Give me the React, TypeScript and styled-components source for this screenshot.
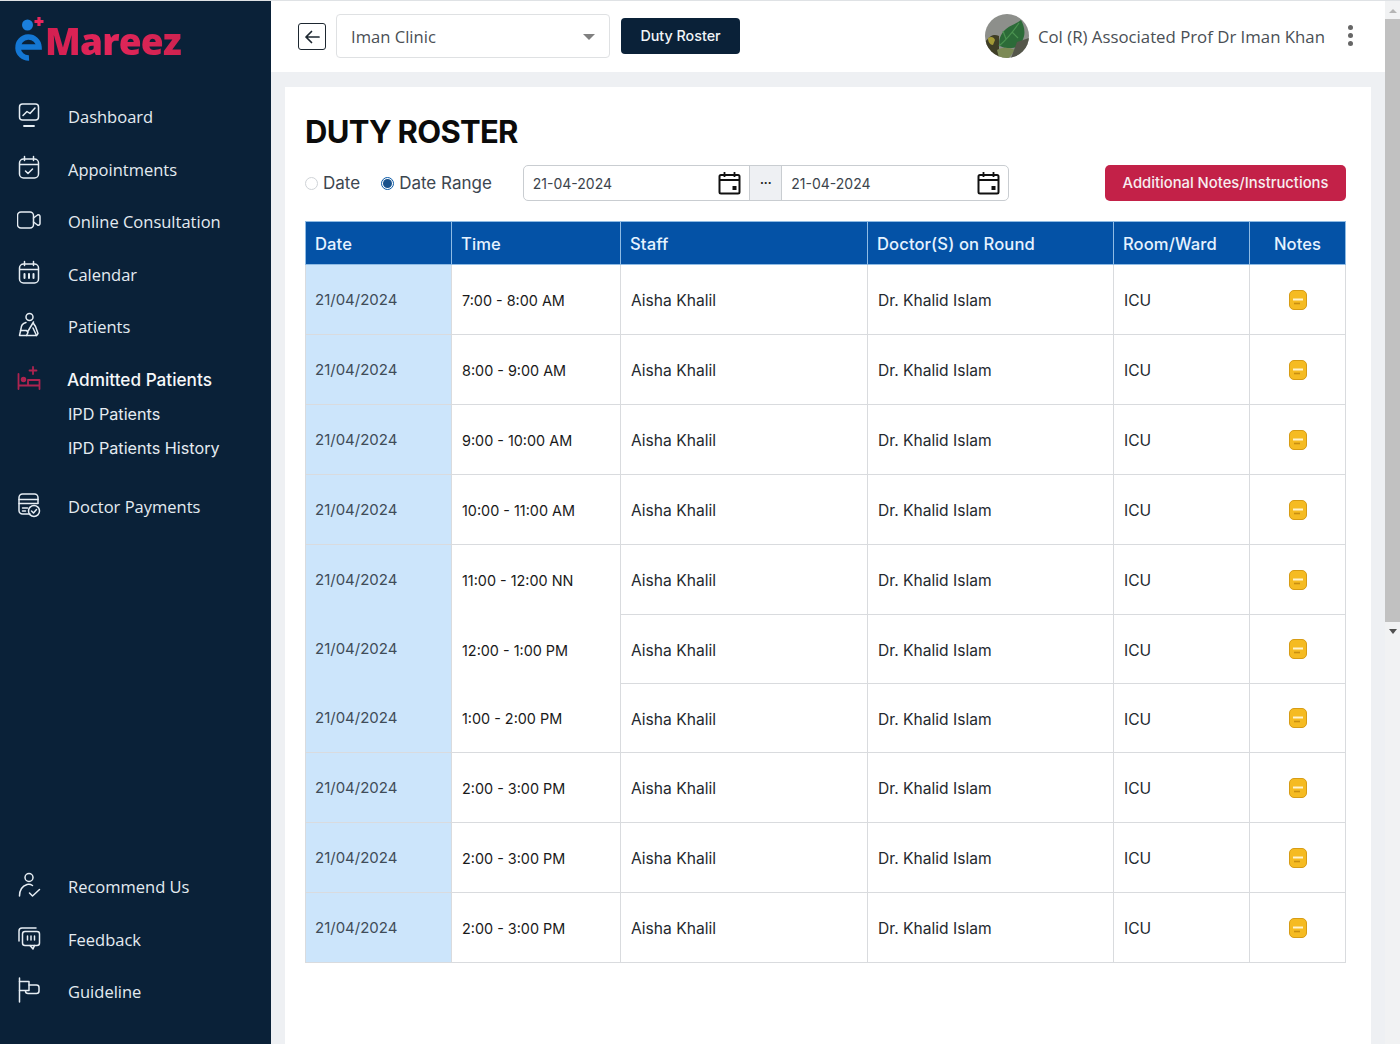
import React from "react";
import styled, { createGlobalStyle } from "styled-components";

const Global = createGlobalStyle`
  html, body { margin: 0; padding: 0; background: #eef0f3; }
  * { box-sizing: border-box; }
  #root { width: 1400px; height: 1044px; overflow: hidden; }
`;

const sans = `"Open Sans", "Noto Sans", sans-serif`;
const geo = `Inter, "Noto Sans", sans-serif`;

const Page = styled.div`
  display: flex;
  height: 1044px;
  border-top: 1px solid #dfe2e5;
  font-family: ${geo};
`;

const Sidebar = styled.aside`
  width: 271px;
  flex: none;
  background: #0a2138;
  display: flex;
  flex-direction: column;
  padding-bottom: 26px;
`;

const Logo = styled.div`
  height: 89.5px;
  display: flex;
  align-items: flex-start;
  padding: 11px 0 0 14px;
`;

const LogoWord = styled.span`
  font-family: ${sans};
  font-weight: 800;
  font-size: 37px;
  line-height: 48px;
  margin-top: 5px;
  letter-spacing: -0.8px;
  background: linear-gradient(90deg, #d31f50, #e2265a 45%, #cf2350);
  -webkit-background-clip: text;
  background-clip: text;
  color: transparent;
`;

const NavGroup = styled.nav`
  display: flex;
  flex-direction: column;
`;

const BottomGroup = styled(NavGroup)`
  margin-top: auto;
`;

const NavItem = styled.div<{ $active?: boolean }>`
  height: 52.5px;
  display: flex;
  align-items: center;
  gap: ${(p) => (p.$active ? "26px" : "27px")};
  padding-left: 17px;
  color: ${(p) => (p.$active ? "#f6f8fa" : "#e4ebf1")};
  font-family: ${(p) => (p.$active ? geo : sans)};
  font-weight: 500;
  font-size: ${(p) => (p.$active ? "17.2px" : "16.5px")};
`;

const SubItem = styled.div`
  height: 34px;
  display: flex;
  align-items: center;
  padding-left: 68px;
  color: #e4ebf1;
  font-size: 16.2px;
  font-weight: 400;
`;

const SubGroup = styled.div`
  margin-top: -9px;
  margin-bottom: 16px;
`;

const Main = styled.div`
  flex: 1;
  display: flex;
  flex-direction: column;
  min-width: 0;
`;

const Header = styled.header`
  height: 71px;
  flex: none;
  background: #fff;
  display: flex;
  align-items: center;
  padding: 0 32px 0 27px;
`;

const BackButton = styled.div`
  width: 28px;
  height: 27px;
  border: 1.5px solid #1d2730;
  border-radius: 3px;
  margin-right: 10px;
  display: flex;
  align-items: center;
  justify-content: center;
`;

const ClinicSelect = styled.div`
  width: 274px;
  height: 44px;
  border: 1px solid #dfe1e3;
  border-radius: 4px;
  display: flex;
  align-items: center;
  justify-content: space-between;
  padding: 2px 14px 0 14px;
  font-family: ${sans};
  font-size: 16.6px;
  color: #4a4f55;
  margin: -2px 11px 0 0;
`;

const Caret = styled.span`
  width: 0;
  height: 0;
  border-left: 6px solid transparent;
  border-right: 6px solid transparent;
  border-top: 6px solid #808080;
`;

const DarkButton = styled.button`
  width: 119px;
  height: 36px;
  border: 0;
  border-radius: 4px;
  background: #0a2138;
  color: #f1f5f8;
  font-family: ${geo};
  font-weight: 500;
  font-size: 14.3px;
  margin-top: -2px;
`;

const UserBlock = styled.div`
  margin-left: auto;
  display: flex;
  align-items: center;
`;

const Avatar = styled.div`
  width: 44px;
  height: 44px;
  border-radius: 50%;
  overflow: hidden;
  margin: -2px 9px 0 0;
`;

const UserName = styled.span`
  font-family: ${sans};
  font-size: 16.8px;
  color: #4a4f55;
  margin-right: 23px;
  white-space: nowrap;
`;

const Kebab = styled.div`
  display: flex;
  flex-direction: column;
  gap: 3px;
  margin-top: -2px;
  span {
    width: 5px;
    height: 5px;
    border-radius: 50%;
    background: #666;
  }
`;

const Content = styled.main`
  flex: 1;
  padding: 15px 14px 0;
  min-height: 0;
`;

const Card = styled.section`
  height: 100%;
  background: #fff;
  padding: 27px 25px 0 20px;
`;

const Title = styled.h1`
  margin: 0;
  font-family: ${geo};
  font-weight: 700;
  font-size: 31px;
  letter-spacing: -0.7px;
  line-height: 36px;
  color: #0b0b0b;
`;

const FilterRow = styled.div`
  display: flex;
  align-items: center;
  height: 36px;
  margin-top: 15px;
`;

const RadioLabel = styled.label`
  display: flex;
  align-items: center;
  gap: 5px;
  font-size: 17px;
  color: #3c4650;
  margin-right: 21px;
`;

const RadioDot = styled.span<{ $on?: boolean }>`
  width: 13px;
  height: 13px;
  border-radius: 50%;
  border: 1px solid ${(p) => (p.$on ? "#0a5aa8" : "#cfd3d7")};
  display: flex;
  align-items: center;
  justify-content: center;
  &::after {
    content: "";
    width: 9px;
    height: 9px;
    border-radius: 50%;
    background: ${(p) => (p.$on ? "#18518c" : "transparent")};
  }
`;

const DateGroup = styled.div`
  margin-left: 10px;
  width: 486px;
  height: 36px;
  border: 1px solid #c9cdd1;
  border-radius: 5px;
  display: flex;
  overflow: hidden;
`;

const DateField = styled.div`
  flex: 1;
  display: flex;
  align-items: center;
  justify-content: space-between;
  padding: 0 8px 0 9px;
  font-size: 14px;
  color: #3c444c;
`;

const DateDots = styled.div`
  width: 33px;
  flex: none;
  background: #eef0f3;
  border-left: 1px solid #c9cdd1;
  border-right: 1px solid #c9cdd1;
  display: flex;
  align-items: center;
  justify-content: center;
  font-size: 11px;
  font-weight: 800;
  color: #222;
`;

const NotesButton = styled.button`
  margin-left: auto;
  width: 241px;
  height: 36px;
  border: 0;
  border-radius: 5px;
  background: #c32148;
  color: #f7eef0;
  font-family: ${geo};
  font-weight: 500;
  font-size: 14.8px;
`;

const Table = styled.table`
  margin-top: 20px;
  width: 1040px;
  table-layout: fixed;
  border-collapse: collapse;
`;

const Th = styled.th`
  height: 43px;
  background: #0452a6;
  color: #e6f2ff;
  font-weight: 500;
  font-size: 16.6px;
  letter-spacing: 0.1px;
  text-align: left;
  padding: 2px 9px 0;
  border: 1px solid #8fbbe4;
`;

const NotesTh = styled(Th)`
  text-align: center;
`;

const Td = styled.td<{ $open?: boolean; $h: number }>`
  height: ${(p) => p.$h}px;
  padding: 2px 10px 0;
  font-size: 15.6px;
  color: #24292e;
  border-left: 1px solid #d9dbde;
  border-right: 1px solid #d9dbde;
  border-bottom: ${(p) => (p.$open ? "0" : "1px solid #d9dbde")};
`;

const DateTd = styled(Td)`
  background: #cce5fb;
  color: #3f4c58;
  padding: 0 9px 1px;
  font-size: 15px;
`;

const TimeTd = styled(Td)`
  color: #1a1a1a;
  font-size: 14.4px;
`;

const NoteTd = styled(Td)`
  text-align: center;
  padding: 0;
`;

const NoteIcon = styled.svg`
  display: block;
  margin: 0 auto;
`;

const Scrollbar = styled.div`
  width: 15px;
  flex: none;
  background: #f1f2f3;
  display: flex;
  flex-direction: column;
  align-items: center;
`;

const ScrollArrowUp = styled.span`
  margin: 8px 0 6px;
  width: 0;
  height: 0;
  border-left: 4px solid transparent;
  border-right: 4px solid transparent;
  border-bottom: 4px solid #b5b5b5;
`;

const ScrollThumb = styled.div`
  width: 100%;
  height: 603px;
  background: #c1c1c1;
`;

const ScrollArrowDown = styled.span`
  margin-top: 7px;
  width: 0;
  height: 0;
  border-left: 4px solid transparent;
  border-right: 4px solid transparent;
  border-top: 5px solid #505050;
`;

const Ico: React.FC<{ color?: string; children: React.ReactNode }> = ({ color = "#e6edf3", children }) => (
  <svg width="24" height="28" viewBox="0 0 24 28" fill="none" stroke={color} strokeWidth="1.5" strokeLinecap="round" strokeLinejoin="round" style={{ flex: "none", marginTop: -3 }}>
    {children}
  </svg>
);

const icons: Record<string, React.ReactNode> = {
  dashboard: (
    <Ico>
      <rect x="2.5" y="3" width="19" height="16" rx="3" />
      <path d="M6 14.5l4-4 3 2 5-5.5" />
      <path d="M7 25h10" strokeWidth="1.8" />
    </Ico>
  ),
  appointments: (
    <Ico>
      <rect x="2.5" y="5" width="19" height="19" rx="4" />
      <path d="M7.5 2.5v4M16.5 2.5v4M3 10.5h18" />
      <path d="M8.5 17l2.5 2.5 4.5-4.5" />
    </Ico>
  ),
  video: (
    <Ico>
      <rect x="0.5" y="6" width="16" height="16" rx="3.5" />
      <path d="M16.5 12l4-3c1-.6 2.5 0 2.5 1.5v7c0 1.5-1.5 2.100-2.500 1.500l-4-3" />
    </Ico>
  ),
  calendar: (
    <Ico>
      <rect x="2.5" y="5" width="19" height="19" rx="4" />
      <path d="M7.500 2.500v4M16.500 2.500v4M3 10.500h18" />
      <path d="M7.500 15v4M12 15v4M16.500 15v4" strokeWidth="2" />
    </Ico>
  ),
  patients: (
    <Ico>
      <circle cx="12.500" cy="6" r="3.500" />
      <path d="M9 11.500c-3 .8-5 3-5 6.500l-1.500 6.500h17l1.500-2-2.500-7-2-3" />
      <path d="M3.500 19.500h6l1.500 2-1.500 3M10.500 21l6-10M16 17l3.500 7.500" />
    </Ico>
  ),
  bed: (
    <Ico color="#ad2450">
      <path d="M16 3v7M12.500 6.500h7" strokeWidth="1.800" />
      <path d="M1.500 10v15M1.500 21.500h21M22.500 25v-9H11v5" strokeWidth="1.800" />
      <circle cx="6.500" cy="15.500" r="2" fill="#ad2450" />
    </Ico>
  ),
  payments: (
    <Ico>
      <path d="M13 23H5.500a3.500 3.500 0 0 1-3.500-3.500v-13A3.500 3.500 0 0 1 5.500 3h12A3.500 3.500 0 0 1 21 6.500V12" />
      <path d="M2 8.500h19M2 12.500h19M5.500 17h5M5.500 20h3" />
      <circle cx="17" cy="20" r="5.500" />
      <path d="M14.500 20l2 2 3-3.500" />
    </Ico>
  ),
  recommend: (
    <Ico>
      <circle cx="12" cy="6.500" r="4" />
      <path d="M2.500 25c0-6 3-10 7.500-11.500 2-.5 4 0 5.500 1" />
      <path d="M12.500 22l3 3 7-6.500" />
    </Ico>
  ),
  feedback: (
    <Ico>
      <path d="M2 17V7a3 3 0 0 1 3-3h14" />
      <rect x="5.500" y="7.500" width="17" height="14" rx="2.500" />
      <path d="M13 21.500l3 3.500 1.500-3.500M10.500 12v4M14 12v4M17.500 12v4" />
    </Ico>
  ),
  flag: (
    <Ico>
      <path d="M2.500 2v24" />
      <path d="M2.500 5.500h9.500v9h-9.500" />
      <path d="M12 9h7.500a2.500 2.500 0 0 1 2.500 2.500v3.500a2.500 2.500 0 0 1-2.500 2.500H11a2.500 2.500 0 0 1-2.500-2.500" />
    </Ico>
  ),
};

const CalIcon = () => (
  <svg width="23" height="24" viewBox="0 0 23 24" fill="none" stroke="#111" strokeWidth="2">
    <rect x="1.500" y="4" width="20" height="18.500" rx="1.500" />
    <path d="M1.500 9h20M6.500 1v5M16.500 1v5" strokeWidth="1.800" />
    <rect x="14.500" y="15" width="4" height="4" fill="#111" stroke="none" />
  </svg>
);

const NoteGlyph = () => (
  <NoteIcon width="18" height="20" viewBox="0 0 18 20">
    <rect x="0.500" y="0.500" width="17" height="19" rx="4.500" fill="#f5bb22" stroke="#d79c14" />
    <path d="M4 9.500h10" stroke="#fff3cf" strokeWidth="2" />
    <path d="M5 13.500h6" stroke="#c98f10" strokeWidth="1.600" />
  </NoteIcon>
);

const rows: { time: string; h: number; open?: boolean }[] = [
  { time: "7:00 - 8:00 AM", h: 70 },
  { time: "8:00 - 9:00 AM", h: 70 },
  { time: "9:00 - 10:00 AM", h: 70 },
  { time: "10:00 - 11:00 AM", h: 70 },
  { time: "11:00 - 12:00 NN", h: 70, open: true },
  { time: "12:00 - 1:00 PM", h: 69, open: true },
  { time: "1:00 - 2:00 PM", h: 69 },
  { time: "2:00 - 3:00 PM", h: 70 },
  { time: "2:00 - 3:00 PM", h: 70 },
  { time: "2:00 - 3:00 PM", h: 70 },
];

export default function App() {
  return (
    <>
      <Global />
      <Page>
        <Sidebar>
          <Logo>
            <svg width="31" height="50" viewBox="0 0 31 50" fill="none">
              <circle cx="13.500" cy="13" r="5.500" fill="#1b7fdc" />
              <path d="M25 5v9M20.500 9.500h9" stroke="#e8265c" strokeWidth="3.200" />
              <path d="M4.500 35h20.500a10.500 10.500 0 1 0-10 11" stroke="#1477d4" strokeWidth="5.500" />
            </svg>
            <LogoWord>Mareez</LogoWord>
          </Logo>
          <NavGroup>
            <NavItem>{icons.dashboard}Dashboard</NavItem>
            <NavItem>{icons.appointments}Appointments</NavItem>
            <NavItem>{icons.video}Online Consultation</NavItem>
            <NavItem>{icons.calendar}Calendar</NavItem>
            <NavItem>{icons.patients}Patients</NavItem>
            <NavItem $active>{icons.bed}Admitted Patients</NavItem>
            <SubGroup>
              <SubItem>IPD Patients</SubItem>
              <SubItem>IPD Patients History</SubItem>
            </SubGroup>
            <NavItem>{icons.payments}Doctor Payments</NavItem>
          </NavGroup>
          <BottomGroup>
            <NavItem>{icons.recommend}Recommend Us</NavItem>
            <NavItem>{icons.feedback}Feedback</NavItem>
            <NavItem>{icons.flag}Guideline</NavItem>
          </BottomGroup>
        </Sidebar>
        <Main>
          <Header>
            <BackButton>
              <svg width="18" height="16" viewBox="0 0 18 16" fill="none" stroke="#1d2730" strokeWidth="1.700" strokeLinecap="round" strokeLinejoin="round">
                <path d="M16 8H3M8.500 2.500L3 8l5.500 5.500" />
              </svg>
            </BackButton>
            <ClinicSelect>
              Iman Clinic
              <Caret />
            </ClinicSelect>
            <DarkButton>Duty Roster</DarkButton>
            <UserBlock>
              <Avatar>
                <svg width="44" height="44" viewBox="0 0 44 44">
                  <rect width="44" height="44" fill="#8d8f8b" />
                  <path d="M0 28c6-8 10-8 14-6v22H0z" fill="#3f3e26" />
                  <path d="M3 24c3-2 6-1 7 2l-2 5c-3 0-5-3-5-7z" fill="#a39a36" />
                  <path d="M36 6c5 9 5 19-3 26-5 3-12 3-18 0-2-4 0-12 6-17 5-4 10-5 15-9z" fill="#2c6b38" />
                  <path d="M14 32c7-6 13-13 20-23M21 25l-3-8M27 18l6 6" stroke="#4a9250" strokeWidth="1.200" fill="none" />
                  <path d="M12 36c5-3 12-3 18 0l-6 8H14z" fill="#7c8a55" />
                  <path d="M32 28l12-4v20H26z" fill="#55574a" />
                </svg>
              </Avatar>
              <UserName>Col (R) Associated Prof Dr Iman Khan</UserName>
              <Kebab>
                <span />
                <span />
                <span />
              </Kebab>
            </UserBlock>
          </Header>
          <Content>
            <Card>
              <Title>DUTY ROSTER</Title>
              <FilterRow>
                <RadioLabel>
                  <RadioDot />
                  Date
                </RadioLabel>
                <RadioLabel>
                  <RadioDot $on />
                  Date Range
                </RadioLabel>
                <DateGroup>
                  <DateField>
                    21-04-2024
                    <CalIcon />
                  </DateField>
                  <DateDots>···</DateDots>
                  <DateField>
                    21-04-2024
                    <CalIcon />
                  </DateField>
                </DateGroup>
                <NotesButton>Additional Notes/Instructions</NotesButton>
              </FilterRow>
              <Table>
                <colgroup>
                  <col style={{ width: 146 }} />
                  <col style={{ width: 169 }} />
                  <col style={{ width: 247 }} />
                  <col style={{ width: 246 }} />
                  <col style={{ width: 136 }} />
                  <col style={{ width: 96 }} />
                </colgroup>
                <thead>
                  <tr>
                    <Th>Date</Th>
                    <Th>Time</Th>
                    <Th>Staff</Th>
                    <Th>Doctor(S) on Round</Th>
                    <Th>Room/Ward</Th>
                    <NotesTh>Notes</NotesTh>
                  </tr>
                </thead>
                <tbody>
                  {rows.map((r, i) => (
                    <tr key={i}>
                      <DateTd $h={r.h} $open={r.open}>21/04/2024</DateTd>
                      <TimeTd $h={r.h} $open={r.open}>{r.time}</TimeTd>
                      <Td $h={r.h}>Aisha Khalil</Td>
                      <Td $h={r.h}>Dr. Khalid Islam</Td>
                      <Td $h={r.h}>ICU</Td>
                      <NoteTd $h={r.h}><NoteGlyph /></NoteTd>
                    </tr>
                  ))}
                </tbody>
              </Table>
            </Card>
          </Content>
        </Main>
        <Scrollbar>
          <ScrollArrowUp />
          <ScrollThumb />
          <ScrollArrowDown />
        </Scrollbar>
      </Page>
    </>
  );
}
